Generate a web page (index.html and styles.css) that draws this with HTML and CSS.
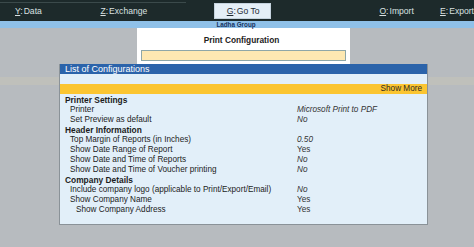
FILE: index.html
```html
<!DOCTYPE html>
<html lang="en">
<head>
    <meta charset="UTF-8">
    <title>Print Configuration</title>
    <link rel="stylesheet" href="styles.css">
</head>
<body>

    <div class="topbar">
        <div class="topbar-line"></div>
        <div class="menu">
            <span class="menu-item item-data"><u>Y</u>:<span class="lbl">Data</span></span>
            <span class="menu-item item-exchange"><u>Z</u>:<span class="lbl">Exchange</span></span>
            <span class="menu-item item-goto"><u>G</u>:<span class="lbl">Go To</span></span>
            <span class="menu-item item-import"><u>O</u>:<span class="lbl">Import</span></span>
            <span class="menu-item item-export"><u>E</u>:<span class="lbl">Export</span></span>
        </div>
    </div>

    <div class="company">Ladha Group</div>

    <div class="workspace">
        <div class="print-panel">
            <div class="print-title">Print Configuration</div>
            <div class="print-input"></div>
        </div>

        <div class="dialog">
            <div class="dialog-head">List of Configurations</div>
            <div class="dialog-blank"></div>
            <div class="dialog-more">Show More</div>

            <div class="dialog-body">
                <div class="row heading"><span>Printer Settings</span></div>
                <div class="row"><span class="lv1">Printer</span><span class="val">Microsoft Print to PDF</span></div>
                <div class="row"><span class="lv1">Set Preview as default</span><span class="val">No</span></div>
                <div class="row heading"><span>Header Information</span></div>
                <div class="row"><span class="lv1">Top Margin of Reports (in Inches)</span><span class="val">0.50</span></div>
                <div class="row"><span class="lv1">Show Date Range of Report</span><span class="val yes">Yes</span></div>
                <div class="row"><span class="lv1">Show Date and Time of Reports</span><span class="val">No</span></div>
                <div class="row"><span class="lv1">Show Date and Time of Voucher printing</span><span class="val">No</span></div>
                <div class="row heading"><span>Company Details</span></div>
                <div class="row"><span class="lv1">Include company logo (applicable to Print/Export/Email)</span><span class="val">No</span></div>
                <div class="row"><span class="lv1">Show Company Name</span><span class="val yes">Yes</span></div>
                <div class="row"><span class="lv2">Show Company Address</span><span class="val yes">Yes</span></div>
            </div>
        </div>
    </div>

</body>
</html>
```

FILE: styles.css
```css
:root {
    --bar-bg: #1d2a2b;
    --bar-txt: #d9e0e0;
    --strip-bg: #8fc1e9;
    --strip-txt: #16325f;
    --desk-bg: #b7bbbf;
    --desk-band: #bfc0bb;
    --panel-input: #fde8b2;
    --head-blue: #2b63aa;
    --body-blue: #e2eff9;
    --more-bg: #fbc531;
    --txt-color: #1c1c1c;
}

* {
    box-sizing: border-box;
}

body {
    margin: 0;
    padding: 0;
    width: 474px;
    height: 247px;
    overflow: hidden;
    background: var(--desk-bg);
    font-family: "Liberation Sans", Arial, sans-serif;
    color: var(--txt-color);
}

/* top menu bar */
.topbar {
    height: 21px;
    background: var(--bar-bg);
    position: relative;
}

.topbar-line {
    position: absolute;
    top: 2px;
    left: 0;
    width: 186px;
    height: 1px;
    background: #3b4a4b;
}

.menu {
    display: flex;
    align-items: center;
    height: 21px;
    padding-left: 15px;
    font-size: 8.6px;
    color: var(--bar-txt);
    white-space: nowrap;
}

.menu-item u {
    text-underline-offset: 1px;
}

.menu-item .lbl {
    margin-left: 1px;
}

.item-data {
    width: 86px;
}

.item-exchange {
    width: 114px;
}

.item-goto {
    width: 58px;
    height: 16px;
    margin-top: 1px;
    padding-left: 12px;
    line-height: 15px;
    background: #e5eff7;
    color: #1e2a33;
    border: 1px solid #c5d3de;
}

.item-import {
    margin-left: 108px;
    width: 61px;
}

/* company strip */
.company {
    height: 7px;
    background: var(--strip-bg);
    text-align: center;
    font-size: 6.3px;
    font-weight: bold;
    line-height: 7px;
    color: var(--strip-txt);
    padding-right: 2px;
}

/* gray desk */
.workspace {
    height: 219px;
    background: linear-gradient(to bottom,
        var(--desk-bg) 0, var(--desk-bg) 49px,
        var(--desk-band) 49px, var(--desk-band) 57px,
        var(--desk-bg) 57px);
}

.print-panel {
    margin-left: 137px;
    width: 213px;
    height: 36px;
    background: #fff;
    padding: 7px 4px 0 4px;
}

.print-title {
    text-align: center;
    font-size: 8.3px;
    font-weight: bold;
    color: #222;
    height: 15px;
    padding-right: 4px;
}

.print-input {
    height: 11px;
    background: var(--panel-input);
    border: 1px solid #8ea7a8;
}

/* configuration list */
.dialog {
    margin-left: 59px;
    width: 369px;
    height: 161px;
    border: 1px solid #8a9298;
    border-top: none;
    background: var(--body-blue);
}

.dialog-head {
    height: 10px;
    background: var(--head-blue);
    color: #fff;
    font-size: 9px;
    line-height: 10px;
    padding-left: 5px;
}

.dialog-blank {
    height: 10px;
    background: var(--body-blue);
}

.dialog-more {
    height: 10px;
    background: var(--more-bg);
    text-align: right;
    font-size: 8.2px;
    line-height: 10px;
    padding-right: 5px;
    color: #2d2a22;
}

.dialog-body {
    padding-top: 1px;
}

.row {
    display: grid;
    grid-template-columns: 237px 1fr;
    height: 10px;
    font-size: 8.2px;
    line-height: 10px;
    white-space: nowrap;
}

.row.heading {
    font-weight: bold;
    font-size: 8.4px;
    padding-left: 5px;
}

.lv1 {
    padding-left: 10px;
}

.lv2 {
    padding-left: 16px;
}

.val {
    font-style: italic;
    color: #333;
}

.val.yes {
    font-style: normal;
}
```
